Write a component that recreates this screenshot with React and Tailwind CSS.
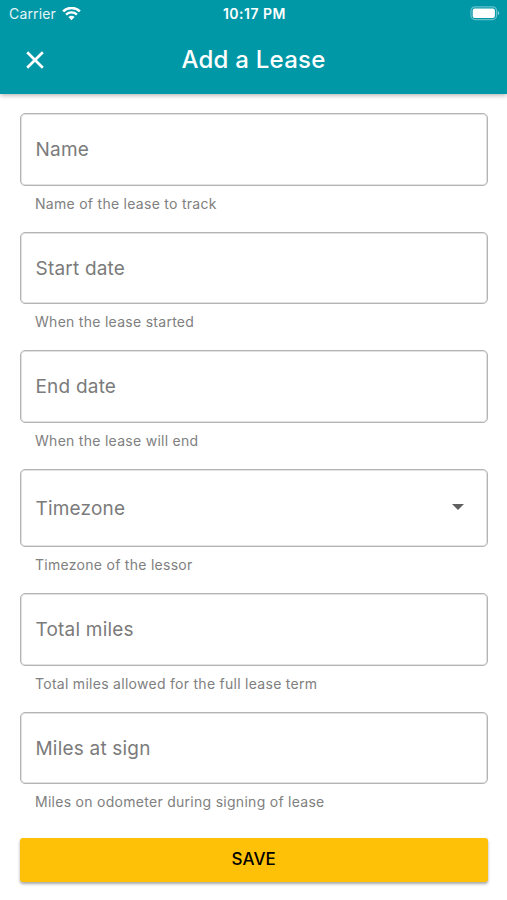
import React from 'react';

const FIELDS = [
  { id: 'name', label: 'Name', helper: 'Name of the lease to track' },
  { id: 'start', label: 'Start date', helper: 'When the lease started' },
  { id: 'end', label: 'End date', helper: 'When the lease will end' },
  {
    id: 'timezone',
    label: 'Timezone',
    helper: 'Timezone of the lessor',
    isSelect: true
  },
  {
    id: 'total',
    label: 'Total miles',
    helper: 'Total miles allowed for the full lease term'
  },
  {
    id: 'sign',
    label: 'Miles at sign',
    helper: 'Miles on odometer during signing of lease'
  }
];

const WifiIcon = () => (
  <svg width="19" height="14" viewBox="0 0 19 14" fill="none">
    <path
      d="M1.1 4.4C5.8 -.1 13.2 -.1 17.9 4.4"
      stroke="white"
      strokeWidth="2.6"
    />
    <path
      d="M4.1 7.6C7.1 4.7 11.9 4.7 14.9 7.6"
      stroke="white"
      strokeWidth="2.3"
    />
    <path d="M9.5 13.2L6.4 10C8.1 8.4 10.9 8.4 12.6 10Z" fill="white" />
  </svg>
);

const BatteryIcon = () => (
  <svg width="31" height="15" viewBox="0 0 31 15" fill="none">
    <rect
      x="1"
      y="0.8"
      width="25.6"
      height="12.8"
      rx="4"
      stroke="white"
      strokeOpacity="0.4"
      strokeWidth="1.2"
    />
    <rect x="2.7" y="2.5" width="22.2" height="9.4" rx="2" fill="white" />
    <path
      d="M27.8 5.1C29.8 5.8 29.8 8.6 27.8 9.3Z"
      fill="white"
      fillOpacity="0.5"
    />
  </svg>
);

const StatusBar = () => (
  <div className="grid h-[27px] grid-cols-[1fr_100px_1fr] items-center pl-[9px] pr-[6px] text-[14px]">
    <div className="flex items-center gap-[6px]">
      <span className="tracking-[0.15px] text-white/90">Carrier</span>
      <WifiIcon />
    </div>
    <span className="-ml-px text-center text-[14px] font-semibold tracking-[0.5px]">
      10:17 PM
    </span>
    <div className="flex justify-end">
      <BatteryIcon />
    </div>
  </div>
);

const Header = () => (
  <header className="h-[94px] bg-[#0097a7] text-white shadow-[0_1px_5px_rgba(0,0,0,0.35)]">
    <StatusBar />
    <div className="grid h-[66px] grid-cols-[70px_1fr_70px] items-center">
      <button type="button" aria-label="Close" className="flex justify-center">
        <svg width="18" height="18" viewBox="0 0 18 18">
          <path
            d="M1.2 1.2L16.8 16.8M16.8 1.2L1.2 16.8"
            stroke="white"
            strokeWidth="2.7"
          />
        </svg>
      </button>
      <h1 className="text-center text-[24px] font-medium tracking-[0.25px]">
        Add a Lease
      </h1>
    </div>
  </header>
);

const Field = ({ label, helper, isSelect }) => (
  <div className={isSelect ? 'h-[124.7px]' : 'h-[118.5px]'}>
    <div
      className={`flex items-center justify-between rounded-[5px] border border-[#b4b4b4] pl-[14.5px] pr-[23px] shadow-[inset_0_0_0_1px_#e2e2e2] ${
        isSelect ? 'h-[78.5px]' : 'h-[72.5px]'
      }`}
    >
      <span className="pt-[2px] text-[19px] tracking-[0.2px] text-[#7b7b7b]">
        {label}
      </span>
      {isSelect && (
        <svg className="mb-px" width="12" height="6" viewBox="0 0 12 6">
          <path d="M0 0H12L6 6Z" fill="#616161" />
        </svg>
      )}
    </div>
    <p className="pl-[15px] pt-[9px] text-[14px] leading-[18px] tracking-[0.28px] text-[#808080]">
      {helper}
    </p>
  </div>
);

const App = () => (
  <div className="h-[900px] w-[507px] overflow-hidden bg-white font-['Inter',sans-serif]">
    <Header />
    <main className="pl-5 pr-[19.5px] pt-[19px]">
      {FIELDS.map((field) => (
        <Field
          key={field.id}
          label={field.label}
          helper={field.helper}
          isSelect={field.isSelect}
        />
      ))}
      <button
        type="button"
        className="mt-[8px] h-[44px] w-full rounded-[3px] bg-[#ffc107] text-[17px] font-medium tracking-[0.1px] text-black shadow-[0_2px_3px_rgba(0,0,0,0.35)]"
      >
        SAVE
      </button>
    </main>
  </div>
);

export default App;
